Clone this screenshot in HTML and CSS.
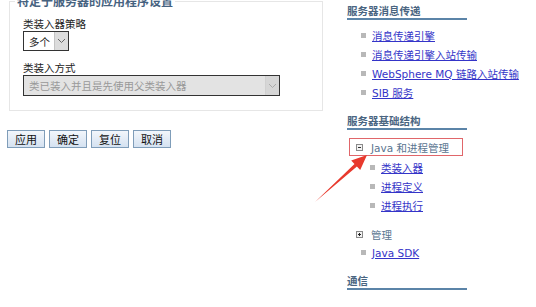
FILE: index.html
```html
<!DOCTYPE html>
<html lang="zh-CN">
<head>
<meta charset="utf-8">
<title>应用程序设置</title>
<link rel="stylesheet" href="styles.css">
</head>
<body>
<div class="page">
  <div class="left">
    <fieldset class="settings">
      <legend class="legend">特定于服务器的应用程序设置</legend>
      <div class="field">
        <div class="label">类装入器策略</div>
        <div class="select select-small">
          <span class="select-text">多个</span>
          <span class="select-btn"><svg width="9" height="6" viewBox="0 0 9 6"><path d="M1 1 L4.5 4.5 L8 1" fill="none" stroke="#666" stroke-width="1"/></svg></span>
        </div>
      </div>
      <div class="field field-second">
        <div class="label">类装入方式</div>
        <div class="select select-wide disabled">
          <span class="select-text">类已装入并且是先使用父类装入器</span>
          <span class="select-btn"><svg width="9" height="6" viewBox="0 0 9 6"><path d="M1 1 L4.5 4.5 L8 1" fill="none" stroke="#aaa" stroke-width="1"/></svg></span>
        </div>
      </div>
    </fieldset>
    <div class="buttons">
      <button class="btn" type="button">应用</button>
      <button class="btn" type="button">确定</button>
      <button class="btn" type="button">复位</button>
      <button class="btn" type="button">取消</button>
    </div>
  </div>

  <div class="right">
    <div class="heading">服务器消息传递</div>
    <ul class="links">
      <li><a href="#">消息传递引擎</a></li>
      <li><a href="#">消息传递引擎入站传输</a></li>
      <li><a href="#">WebSphere MQ 链路入站传输</a></li>
      <li><a href="#">SIB 服务</a></li>
    </ul>

    <div class="heading heading-next">服务器基础结构</div>
    <div class="node node-open">
      <svg class="tree-icon" width="7" height="7" viewBox="0 0 7 7"><rect x="0.5" y="0.5" width="6" height="6" fill="#f2f2f2" stroke="#8a8a8a"/><path d="M2 3.5 H5" stroke="#333" stroke-width="1"/></svg>
      <span>Java 和进程管理</span>
    </div>
    <ul class="links sublinks">
      <li><a href="#">类装入器</a></li>
      <li><a href="#">进程定义</a></li>
      <li><a href="#">进程执行</a></li>
    </ul>
    <div class="node node-closed">
      <svg class="tree-icon" width="7" height="7" viewBox="0 0 7 7"><rect x="0.5" y="0.5" width="6" height="6" fill="#f2f2f2" stroke="#8a8a8a"/><path d="M2 3.5 H5 M3.5 2 V5" stroke="#222" stroke-width="1"/></svg>
      <span>管理</span>
    </div>
    <ul class="links">
      <li><a href="#">Java SDK</a></li>
    </ul>

    <div class="heading heading-last">通信</div>
  </div>

  <svg class="arrow" width="536" height="307" viewBox="0 0 536 307">
    <polygon points="315,202 354.5,163.9 351.2,160.6 367,155 360.2,170 356.9,166.5" fill="#e8392d"/>
  </svg>
</div>
</body>
</html>
```

FILE: styles.css
```css
html, body {
  margin: 0;
  padding: 0;
  background: #ffffff;
}

body {
  font-family: "DejaVu Sans", "Noto Sans CJK SC", sans-serif;
  font-size: 10.5px;
  color: #222;
  width: 536px;
  height: 307px;
  overflow: hidden;
}

.page {
  position: relative;
  display: flex;
  align-items: flex-start;
  gap: 24px;
  height: 307px;
}

.left {
  width: 323px;
  flex: none;
  margin-top: -7px;
}

.settings {
  margin: 0 0 0 9px;
  padding: 8px 13px 14px 13px;
  border: 1px solid #e6e6e6;
  width: 314px;
  box-sizing: border-box;
  min-width: 0;
}

.legend {
  font-family: "Noto Sans CJK SC", sans-serif;
  font-weight: bold;
  font-size: 12px;
  line-height: 16px;
  color: #46627f;
  padding: 0 2px;
  margin-left: -8px;
}

.field {
  display: flex;
  flex-direction: column;
  align-items: flex-start;
}

.field-second {
  margin-top: 10px;
}

.label {
  font-family: "Noto Sans CJK SC", sans-serif;
  line-height: 13px;
  margin-bottom: 1px;
  color: #222;
}

.select {
  display: flex;
  align-items: stretch;
  border: 1px solid #333;
  box-sizing: border-box;
  background: #fff;
}

.select-small {
  width: 46px;
  height: 20px;
}

.select-wide {
  width: 257px;
  height: 21px;
}

.select-text {
  flex: 1;
  display: flex;
  align-items: center;
  padding-left: 5px;
  font-family: "Noto Sans CJK SC", sans-serif;
  font-size: 10.5px;
  white-space: nowrap;
  overflow: hidden;
}

.select-btn {
  width: 13px;
  display: flex;
  align-items: center;
  justify-content: center;
  background: #dcdcdc;
  border-left: 1px solid #c4c4c4;
}

.disabled {
  background: #e3e3e3;
}

.disabled .select-text {
  color: #999;
}

.disabled .select-btn {
  background: #d6d6d6;
  border-left: 1px solid #d0d0d0;
}

.buttons {
  display: flex;
  gap: 4px;
  margin: 19px 0 0 7px;
}

.btn {
  width: 38px;
  height: 18px;
  padding: 0;
  margin: 0;
  border: 1px solid #7f9db9;
  background: linear-gradient(#f2f6fb, #d5e2f1);
  font-family: "Noto Sans CJK SC", sans-serif;
  font-size: 11px;
  line-height: 16px;
  color: #111;
}

.right {
  width: 120px;
  flex: none;
  padding-top: 4px;
}

.heading {
  font-family: "Noto Sans CJK SC", sans-serif;
  font-weight: bold;
  line-height: 14px;
  color: #4a6581;
  border-bottom: 2px solid #5b84a8;
  white-space: nowrap;
}

.heading-next {
  margin-top: 12.5px;
}

.heading-last {
  margin-top: 12px;
}

.links {
  list-style: none;
  margin: 5.5px 0 0 0;
  padding: 0 0 0 14px;
}

.links li {
  display: flex;
  align-items: center;
  gap: 6px;
  height: 19px;
  white-space: nowrap;
}

.links li::before {
  content: "";
  width: 5px;
  height: 5px;
  background: #b8b8b8;
  flex: none;
}

.links a {
  color: #3434c8;
  text-decoration: underline;
}

.node {
  display: flex;
  align-items: center;
  gap: 8px;
  height: 18px;
  box-sizing: border-box;
  padding-left: 7px;
  color: #5a7590;
  white-space: nowrap;
}

.node-open {
  margin: 8px 0 0 2px;
  width: 114px;
  border: 1px solid #e0666a;
  padding-left: 6px;
}

.node-closed {
  margin: 10.5px 0 0 2px;
  padding-left: 7px;
}

.tree-icon {
  flex: none;
}

.sublinks {
  margin-top: 1.5px;
  padding-left: 23px;
}

.node-closed + .links {
  margin-top: 0;
}

.arrow {
  position: absolute;
  left: 0;
  top: 0;
  pointer-events: none;
}
```
